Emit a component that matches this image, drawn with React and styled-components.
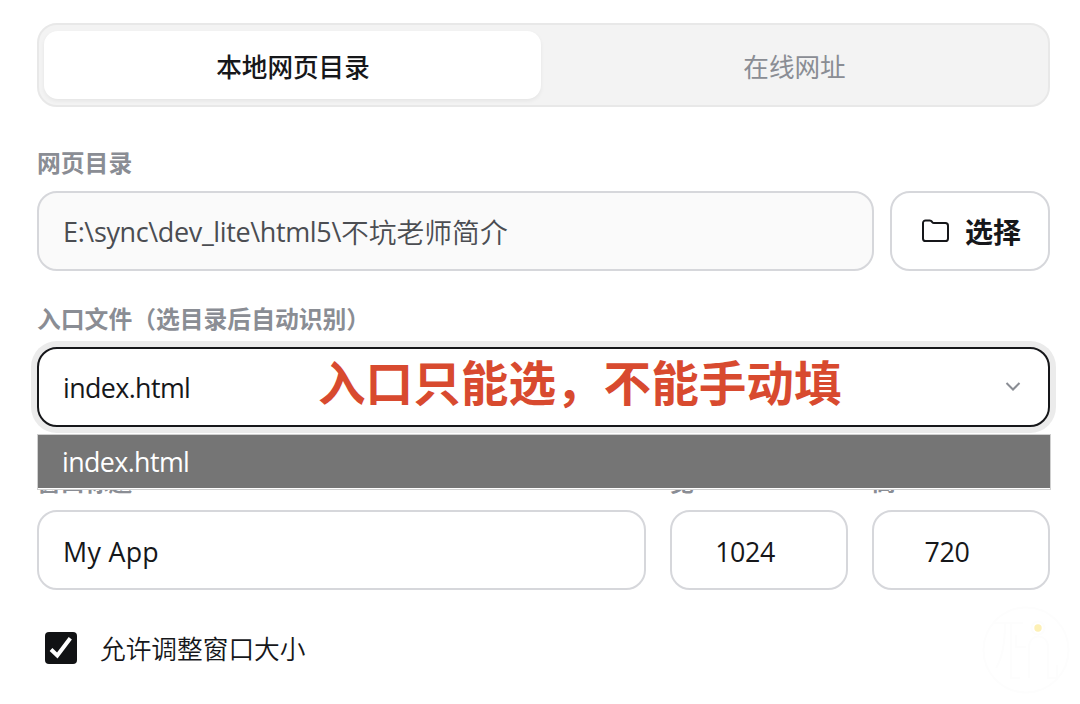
import React, { useState } from 'react';
import styled, { createGlobalStyle } from 'styled-components';

const GlobalStyle = createGlobalStyle`
  * {
    box-sizing: border-box;
  }

  body {
    margin: 0;
    background: #fff;
    color: #16171a;
    font-family: 'Open Sans', 'Noto Sans CJK SC', sans-serif;
    overflow: hidden;
  }

  button,
  input {
    font: inherit;
    color: inherit;
    margin: 0;
  }
`;

const Page = styled.main`
  position: relative;
  width: 1080px;
  height: 704px;
  padding: 23px 30px 0 37px;
  overflow: hidden;
`;

const Tabs = styled.div`
  display: grid;
  grid-template-columns: 497px 1fr;
  height: 84px;
  padding: 6px 6px 6px 5px;
  background: #f3f3f3;
  border: 2px solid #e8e8e8;
  border-radius: 20px;
`;

const Tab = styled.button`
  border: none;
  border-radius: 14px;
  padding: ${props => (props.$active ? '2px 0 0 1px' : '2px 0 0 6px')};
  font-family: 'Noto Sans CJK SC', sans-serif;
  font-size: 25.6px;
  line-height: 36px;
  font-weight: ${props => (props.$active ? 500 : 400)};
  color: ${props => (props.$active ? '#16171a' : '#8a8d94')};
  background: ${props => (props.$active ? '#fff' : 'transparent')};
  box-shadow: ${props => (props.$active ? '0 2px 4px rgba(0, 0, 0, 0.06)' : 'none')};
`;

const Field = styled.div`
  position: relative;
  min-width: 0;
  margin-top: ${props => props.$top || 0}px;
`;

const Label = styled.label`
  display: block;
  height: 32px;
  margin-bottom: 12px;
  font-family: 'Noto Sans CJK SC', sans-serif;
  font-size: 23.8px;
  line-height: 30px;
  font-weight: 700;
  color: #8a8d94;
  white-space: nowrap;
`;

const Row = styled.div`
  display: grid;
  grid-template-columns: 837px 160px;
  gap: 16px;
`;

const SizeRow = styled.div`
  display: grid;
  grid-template-columns: 609px 178px 178px;
  gap: 24px;
  margin-top: 39px;
`;

const Input = styled.input`
  display: block;
  width: 100%;
  height: 80px;
  padding: 3px 24px 0;
  border: 2px solid #d6d7db;
  border-radius: 20px;
  outline: none;
  background: #fff;
  font-size: 26.8px;
  letter-spacing: 0.3px;
`;

const PathBox = styled.div`
  display: flex;
  align-items: center;
  height: 80px;
  padding: 0 24px;
  border: 2px solid #d6d7db;
  border-radius: 20px;
  background: #fafafa;
  color: #4b4d52;
  font-size: 27px;
  letter-spacing: -0.37px;
  white-space: nowrap;
`;

const PathName = styled.span`
  font-family: 'Noto Sans CJK SC', sans-serif;
  font-size: 27.8px;
  font-weight: 350;
  letter-spacing: 0;
`;

const NumberInput = styled(Input)`
  padding: 3px 28px 0 0;
  text-align: center;
  letter-spacing: -0.4px;
`;

const PickButton = styled.button`
  display: flex;
  align-items: center;
  justify-content: center;
  gap: 16px;
  height: 80px;
  padding: 0 0 0 2px;
  border: 2px solid #d6d7db;
  border-radius: 20px;
  background: #fff;
  font-family: 'Noto Sans CJK SC', sans-serif;
  font-size: 28px;
  font-weight: 700;
`;

const Select = styled.button`
  display: flex;
  align-items: center;
  justify-content: space-between;
  width: 100%;
  height: 80px;
  padding: 0 27px 0 24px;
  border: 2px solid #16171a;
  border-radius: 20px;
  background: #fff;
  box-shadow: 0 0 0 6px #ebebeb;
  font-size: 26.8px;
  letter-spacing: -0.6px;
`;

const Menu = styled.div`
  position: absolute;
  top: 131px;
  left: 0;
  right: -1px;
  height: 56px;
  padding-bottom: 1px;
  border: 1px solid #d0d0d0;
  background: #fff;
  z-index: 2;
`;

const MenuItem = styled.div`
  height: 53px;
  padding: 1px 24px 0;
  background: #757575;
  color: #fff;
  font-size: 26.8px;
  line-height: 51px;
  letter-spacing: -0.6px;
`;

const Note = styled.div`
  position: absolute;
  top: 43px;
  left: 281px;
  color: #d84a2f;
  font-family: 'Noto Sans CJK SC', sans-serif;
  font-size: 47.6px;
  font-weight: 700;
  line-height: 70px;
  white-space: nowrap;
  z-index: 1;
`;

const CheckRow = styled.label`
  display: flex;
  align-items: center;
  gap: 23px;
  margin: 39px 0 0 8px;
  height: 38px;
  font-family: 'Noto Sans CJK SC', sans-serif;
  font-size: 25.7px;
  font-weight: 350;
  line-height: 38px;
`;

const CheckBox = styled.span`
  display: flex;
  width: 32px;
  height: 32px;
  border-radius: 4px;
  background: #111214;
`;

const Watermark = styled.svg`
  position: absolute;
  left: 980px;
  top: 604px;
`;

const FolderIcon = () => (
  <svg width="28" height="24" viewBox="0 0 28 24" fill="none" stroke="#16171a" strokeWidth="2">
    <path d="M2 4a2.600 2.600 0 0 1 2.600-2.600h4.200c1 0 1.600.4 2.100 1.200l.3.500c.5.700 1 1 1.800 1h11.400A2.600 2.600 0 0 1 27 6.700v12.700a2.600 2.600 0 0 1-2.600 2.600H4.600A2.600 2.600 0 0 1 2 19.400z" />
  </svg>
);

const ChevronIcon = () => (
  <svg width="16" height="10" viewBox="0 0 16 10" fill="none" stroke="#8a8d94" strokeWidth="2">
    <path d="M1.500 1 8 7.500 14.500 1" />
  </svg>
);

const CheckIcon = () => (
  <svg width="32" height="32" viewBox="0 0 32 32" fill="none" stroke="#fff" strokeWidth="4">
    <path d="M6 17.500 12.300 23.500 25.300 6.200" />
  </svg>
);

const App = () => {
  const [tab, setTab] = useState('local');
  const [title, setTitle] = useState('My App');
  const [width, setWidth] = useState('1024');
  const [height, setHeight] = useState('720');

  return (
    <>
      <GlobalStyle />
      <Page>
        <Tabs>
          <Tab $active={tab === 'local'} onClick={() => setTab('local')}>本地网页目录</Tab>
          <Tab $active={tab === 'online'} onClick={() => setTab('online')}>在线网址</Tab>
        </Tabs>

        <Field $top={40}>
          <Label>网页目录</Label>
          <Row>
            <PathBox>
              E:\sync\dev_lite\html5\<PathName>不坑老师简介</PathName>
            </PathBox>
            <PickButton>
              <FolderIcon />
              选择
            </PickButton>
          </Row>
        </Field>

        <Field $top={32}>
          <Label>入口文件（选目录后自动识别）</Label>
          <Select>
            index.html
            <ChevronIcon />
          </Select>
          <Note>入口只能选，不能手动填</Note>
          <Menu>
            <MenuItem>index.html</MenuItem>
          </Menu>
        </Field>

        <SizeRow>
          <Field>
            <Label>窗口标题</Label>
            <Input value={title} onChange={e => setTitle(e.target.value)} />
          </Field>
          <Field>
            <Label>宽</Label>
            <NumberInput value={width} onChange={e => setWidth(e.target.value)} />
          </Field>
          <Field>
            <Label>高</Label>
            <NumberInput value={height} onChange={e => setHeight(e.target.value)} />
          </Field>
        </SizeRow>

        <CheckRow>
          <CheckBox>
            <CheckIcon />
          </CheckBox>
          允许调整窗口大小
        </CheckRow>

        <Watermark width="96" height="96" viewBox="0 0 96 96" fill="none" stroke="#fdfdfd" strokeWidth="2">
          <circle cx="46" cy="46" r="42.500" />
          <path d="M14 19h29M25 19c0 18-2 34-9 45M31 19v55h9M36 31v12h10M49 74V43c0-14 19-14 19 0v31h9V61" />
          <circle cx="58" cy="24" r="6.500" />
          <circle cx="58" cy="24" r="3.700" fill="#fdf0b5" stroke="none" />
        </Watermark>
      </Page>
    </>
  );
};

export default App;
